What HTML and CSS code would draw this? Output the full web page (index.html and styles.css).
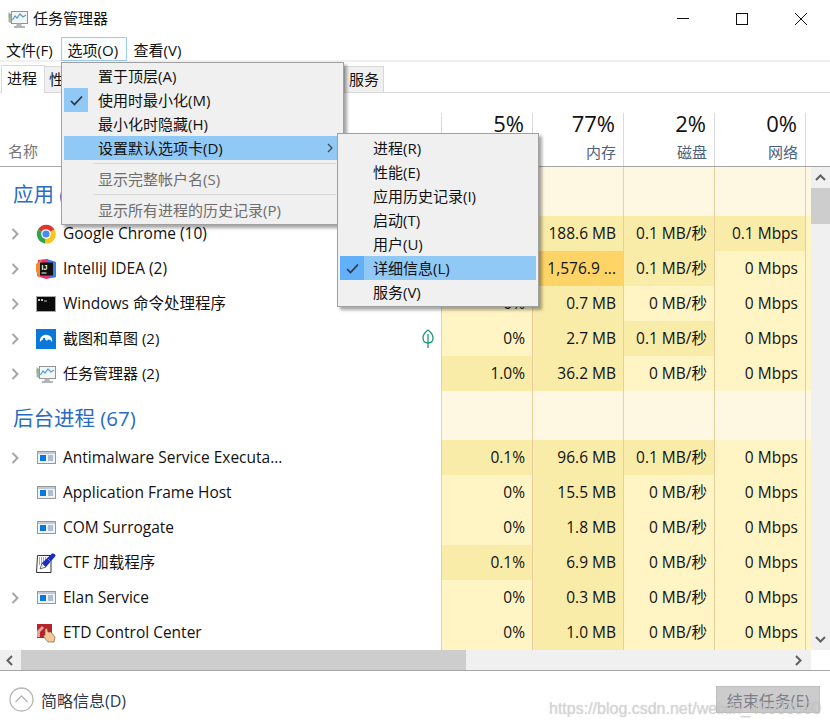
FILE: index.html
```html
<!DOCTYPE html>
<html lang="zh-CN">
<head>
  <meta charset="UTF-8">
  <title>任务管理器</title>
  <link rel="stylesheet" href="styles.css">
</head>
<body>
  <svg class="defs" width="0" height="0">
    <symbol id="chev" viewBox="0 0 8 12"><path d="M1.5 1 L6.5 6 L1.5 11" fill="none" stroke="#a6a6a6" stroke-width="2"/></symbol>
    <symbol id="taskmgr" viewBox="0 0 20 20">
      <path d="M0.500 3 L3 5 L3 14 L0.500 13 Z" fill="#a9b3a9"/>
      <rect x="3.500" y="2.500" width="16" height="12" fill="#f4f6f6" stroke="#8f9595"/>
      <path d="M4.500 11 L7 7 L9 9 L12 5 L15 8 L18 6" fill="none" stroke="#4f9fd6" stroke-width="1.200"/>
      <path d="M0.500 6 h2 M0.500 8 h2" stroke="#63bb63"/>
      <path d="M9 14.500 h4 l1 2.500 h3 v2 H6 v-2 h2 Z" fill="#b0b6b6"/>
    </symbol>
    <symbol id="win" viewBox="0 0 19 13">
      <rect x="0.500" y="0.500" width="18" height="12" fill="#eef3f8" stroke="#989898"/>
      <rect x="1" y="1" width="17" height="2" fill="#c2ccd8"/>
      <rect x="3" y="4" width="6" height="6" fill="#0a78d8"/>
      <path d="M11 5 h5 M11 7 h5 M11 9 h5" stroke="#6f8aa8"/>
    </symbol>
  </svg>

  <div class="window">
    <header class="titlebar">
      <svg class="title-icon"><use href="#taskmgr"/></svg>
      <span class="title-text">任务管理器</span>
      <div class="controls">
        <svg width="12" height="12" viewBox="0 0 12 12"><path d="M0 5.500 H12" stroke="#111"/></svg>
        <svg width="12" height="12" viewBox="0 0 12 12"><rect x="0.500" y="0.500" width="11" height="11" fill="none" stroke="#111"/></svg>
        <svg width="12" height="12" viewBox="0 0 12 12"><path d="M0 0 L12 12 M12 0 L0 12" stroke="#111"/></svg>
      </div>
    </header>

    <nav class="menubar">
      <span class="menu-item">文件(F)</span>
      <span class="menu-item menu-open">选项(O)</span>
      <span class="menu-item">查看(V)</span>
    </nav>

    <div class="tabs">
      <span class="tab tab-active">进程</span>
      <span class="tab">性能</span>
      <span class="tab">应用历史记录</span>
      <span class="tab">启动</span>
      <span class="tab">用户</span>
      <span class="tab">详细信息</span>
      <span class="tab">服务</span>
    </div>

    <div class="head">
      <div class="head-name">名称</div>
      <div class="head-col head-first"><b>5%</b><span>CPU</span></div>
      <div class="head-col"><b>77%</b><span>内存</span></div>
      <div class="head-col"><b>2%</b><span>磁盘</span></div>
      <div class="head-col"><b>0%</b><span>网络</span></div>
    </div>

    <div class="body">
      <div class="list">
        <div class="row section">
          <div class="name section-name">应用 (5)</div>
          <div class="cell first"></div><div class="cell"></div><div class="cell"></div><div class="cell"></div><div class="tail"></div>
        </div>

        <div class="row">
          <div class="name">
            <svg class="chev"><use href="#chev"/></svg>
            <svg class="icon" viewBox="0 0 20 20">
              <path d="M10 10 L2 5.500 A9.500 9.500 0 0 1 18.500 5.500 Z" fill="#e0372c"/>
              <path d="M10 10 L18.500 5.500 A9.500 9.500 0 0 1 9 19.500 Z" fill="#f8c51c"/>
              <path d="M10 10 L9 19.500 A9.500 9.500 0 0 1 2 5.500 Z" fill="#2fa44f"/>
              <circle cx="10" cy="10" r="4.800" fill="#fff"/>
              <circle cx="10" cy="10" r="3.600" fill="#4a8af0"/>
            </svg>
            <span>Google Chrome (10)</span>
          </div>
          <div class="cell first mid">0%</div><div class="cell mid">188.6 MB</div><div class="cell mid">0.1 MB/秒</div><div class="cell mid">0.1 Mbps</div><div class="tail"></div>
        </div>

        <div class="row">
          <div class="name">
            <svg class="chev"><use href="#chev"/></svg>
            <svg class="icon" viewBox="0 0 20 20">
              <path d="M2 1 L11 0 L19 8 L20 18 L10 20 L1 17 Z" fill="#e8316f"/>
              <path d="M11 0 L20 3 L20 18 L14 19 Z" fill="#3d7ee8"/>
              <path d="M0 5 L5 1 L8 10 L3 19 L0 12 Z" fill="#f28a2e"/>
              <rect x="4" y="3.500" width="13" height="13" fill="#111"/>
              <text x="5.500" y="10.500" class="ij">IJ</text>
              <path d="M5.500 14 h5" stroke="#fff"/>
            </svg>
            <span>IntelliJ IDEA (2)</span>
          </div>
          <div class="cell first mid">0%</div><div class="cell high">1,576.9 ...</div><div class="cell mid">0.1 MB/秒</div><div class="cell">0 Mbps</div><div class="tail"></div>
        </div>

        <div class="row">
          <div class="name">
            <svg class="chev"><use href="#chev"/></svg>
            <svg class="icon" viewBox="0 0 20 20">
              <rect x="0.500" y="2.500" width="19" height="15" fill="#0a0a0a" stroke="#a8a8a8"/>
              <path d="M2 5 h2 v2 H2 Z M5 5 h2 v2 H5 Z" fill="#c8c8c8"/>
              <path d="M8 7 h3" stroke="#c8c8c8"/>
            </svg>
            <span class="mixed">Windows 命令处理程序</span>
          </div>
          <div class="cell first">0%</div><div class="cell mid">0.7 MB</div><div class="cell">0 MB/秒</div><div class="cell">0 Mbps</div><div class="tail"></div>
        </div>

        <div class="row">
          <div class="name">
            <svg class="chev"><use href="#chev"/></svg>
            <svg class="icon" viewBox="0 0 20 20">
              <rect width="20" height="20" fill="#0a78d8"/>
              <path d="M4 13 C3 8 8 5 11 6 C15 6 17 10 16 13 C14 10 12 10 11 12 C9 9 6 10 4 13 Z" fill="#fff"/>
              <circle cx="8" cy="10" r="1.200" fill="#0a78d8"/>
            </svg>
            <span class="mixed cjk">截图和草图 (2)</span>
            <svg class="leaf" width="12" height="19" viewBox="0 0 12 19">
              <path d="M6 1 C2 4 1 7 1 9 C1 12 3 14 6 14 C9 14 11 12 11 9 C11 7 10 4 6 1 Z" fill="none" stroke="#1a9a7a" stroke-width="1.300"/>
              <path d="M6 5 V19" stroke="#1a9a7a" stroke-width="1.300"/>
            </svg>
          </div>
          <div class="cell first">0%</div><div class="cell mid">2.7 MB</div><div class="cell mid">0.1 MB/秒</div><div class="cell">0 Mbps</div><div class="tail"></div>
        </div>

        <div class="row">
          <div class="name">
            <svg class="chev"><use href="#chev"/></svg>
            <svg class="icon"><use href="#taskmgr"/></svg>
            <span class="mixed cjk">任务管理器 (2)</span>
          </div>
          <div class="cell first mid">1.0%</div><div class="cell mid">36.2 MB</div><div class="cell">0 MB/秒</div><div class="cell">0 Mbps</div><div class="tail"></div>
        </div>

        <div class="row section">
          <div class="name section-name">后台进程 (67)</div>
          <div class="cell first"></div><div class="cell"></div><div class="cell"></div><div class="cell"></div><div class="tail"></div>
        </div>

        <div class="row">
          <div class="name">
            <svg class="chev"><use href="#chev"/></svg>
            <svg class="icon win"><use href="#win"/></svg>
            <span>Antimalware Service Executa...</span>
          </div>
          <div class="cell first mid">0.1%</div><div class="cell mid">96.6 MB</div><div class="cell mid">0.1 MB/秒</div><div class="cell">0 Mbps</div><div class="tail"></div>
        </div>

        <div class="row">
          <div class="name">
            <span class="chev"></span>
            <svg class="icon win"><use href="#win"/></svg>
            <span>Application Frame Host</span>
          </div>
          <div class="cell first">0%</div><div class="cell mid">15.5 MB</div><div class="cell">0 MB/秒</div><div class="cell">0 Mbps</div><div class="tail"></div>
        </div>

        <div class="row">
          <div class="name">
            <span class="chev"></span>
            <svg class="icon win"><use href="#win"/></svg>
            <span>COM Surrogate</span>
          </div>
          <div class="cell first">0%</div><div class="cell mid">1.8 MB</div><div class="cell">0 MB/秒</div><div class="cell">0 Mbps</div><div class="tail"></div>
        </div>

        <div class="row">
          <div class="name">
            <span class="chev"></span>
            <svg class="icon" viewBox="0 0 20 20">
              <path d="M1.500 2.500 H15 V19.500 H0.500 Z" fill="#fff" stroke="#333"/>
              <path d="M3 5 h8 M3 7 h7 M3 9 h5 M3 11 h4" stroke="#555" stroke-dasharray="1 1"/>
              <path d="M4 16 L6 10 L16 0.500 Q19.500 0 19.500 3 L10 14 Z" fill="#1a2fc0"/>
              <path d="M4 16 L6 10 L10 14 Z" fill="#e8e8e8" stroke="#222" stroke-width="0.500"/>
              <path d="M12 6 L15 9" stroke="#6f86f0"/>
            </svg>
            <span class="mixed">CTF 加载程序</span>
          </div>
          <div class="cell first mid">0.1%</div><div class="cell mid">6.9 MB</div><div class="cell">0 MB/秒</div><div class="cell">0 Mbps</div><div class="tail"></div>
        </div>

        <div class="row">
          <div class="name">
            <svg class="chev"><use href="#chev"/></svg>
            <svg class="icon win"><use href="#win"/></svg>
            <span>Elan Service</span>
          </div>
          <div class="cell first">0%</div><div class="cell mid">0.3 MB</div><div class="cell">0 MB/秒</div><div class="cell">0 Mbps</div><div class="tail"></div>
        </div>

        <div class="row">
          <div class="name">
            <span class="chev"></span>
            <svg class="icon" viewBox="0 0 20 20">
              <rect x="1" y="1" width="15" height="14" fill="#b5232b"/>
              <path d="M1 8 L6 3 L8 5 L4 9 V14 H1 Z" fill="#e8a0a0"/>
              <path d="M9 6 L11 5 L12 9 L15 9 L19 14 L18 19 L12 19 L7 13 L9 12 Z" fill="#f3c79a" stroke="#7a4a28" stroke-width="0.600"/>
            </svg>
            <span>ETD Control Center</span>
          </div>
          <div class="cell first">0%</div><div class="cell mid">1.0 MB</div><div class="cell">0 MB/秒</div><div class="cell">0 Mbps</div><div class="tail"></div>
        </div>
      </div>

      <div class="vscroll">
        <svg class="vscroll-arrow" width="11" height="7" viewBox="0 0 11 7"><path d="M1 6 L5.500 1.500 L10 6" fill="none" stroke="#606060" stroke-width="2"/></svg>
        <div class="vscroll-thumb"></div>
        <svg class="vscroll-arrow vscroll-down" width="11" height="7" viewBox="0 0 11 7"><path d="M1 1 L5.500 5.500 L10 1" fill="none" stroke="#606060" stroke-width="2"/></svg>
      </div>
    </div>

    <div class="hscroll">
      <svg class="hscroll-arrow" width="7" height="11" viewBox="0 0 7 11"><path d="M6 1 L1.500 5.500 L6 10" fill="none" stroke="#606060" stroke-width="2"/></svg>
      <div class="hscroll-thumb"></div>
      <svg class="hscroll-arrow hscroll-right" width="7" height="11" viewBox="0 0 7 11"><path d="M1 1 L5.500 5.500 L1 10" fill="none" stroke="#606060" stroke-width="2"/></svg>
    </div>

    <footer class="footer">
      <svg class="fewer" width="25" height="25" viewBox="0 0 25 25">
        <circle cx="12.500" cy="12.500" r="11.500" fill="none" stroke="#b5b5b5" stroke-width="1.300"/>
        <path d="M6.500 15 L12.500 9 L18.500 15" fill="none" stroke="#b5b5b5" stroke-width="1.300"/>
      </svg>
      <span class="fewer-text">简略信息(D)</span>
      <button class="end-task" disabled>结束任务(E)</button>
    </footer>

    <div class="popup popup-main">
      <div class="popup-row">置于顶层(A)</div>
      <div class="popup-row">
        <span class="check check-on"><svg width="13" height="11" viewBox="0 0 13 11"><path d="M1 6 L4.500 9.500 L12 1.500" fill="none" stroke="#333" stroke-width="1.700"/></svg></span>
        使用时最小化(M)
      </div>
      <div class="popup-row">最小化时隐藏(H)</div>
      <div class="popup-row popup-hover">
        设置默认选项卡(D)
        <svg class="popup-arrow" width="6" height="10" viewBox="0 0 6 10"><path d="M1 1 L5 5 L1 9" fill="none" stroke="#444" stroke-width="1.200"/></svg>
      </div>
      <div class="popup-sep"></div>
      <div class="popup-row popup-off">显示完整帐户名(S)</div>
      <div class="popup-sep"></div>
      <div class="popup-row popup-off">显示所有进程的历史记录(P)</div>
    </div>

    <div class="popup popup-sub">
      <div class="popup-row">进程(R)</div>
      <div class="popup-row">性能(E)</div>
      <div class="popup-row">应用历史记录(I)</div>
      <div class="popup-row">启动(T)</div>
      <div class="popup-row">用户(U)</div>
      <div class="popup-row popup-hover">
        <span class="check check-hover"><svg width="13" height="11" viewBox="0 0 13 11"><path d="M1 6 L4.500 9.500 L12 1.500" fill="none" stroke="#333" stroke-width="1.700"/></svg></span>
        详细信息(L)
      </div>
      <div class="popup-row">服务(V)</div>
    </div>

    <div class="watermark">https://blog.csdn.net/weixin_45903580</div>
  </div>
</body>
</html>
```

FILE: styles.css
```css
* {
  box-sizing: border-box;
}
html, body {
  margin: 0;
  padding: 0;
  background: #fff;
}
body {
  font-family: "Open Sans", "Noto Sans CJK SC", sans-serif;
  font-size: 15px;
  color: #111;
}
.defs {
  position: absolute;
}
.window {
  position: relative;
  width: 830px;
  height: 728px;
  overflow: hidden;
  display: flex;
  flex-direction: column;
}

/* title bar */
.titlebar {
  height: 37px;
  flex: none;
  display: flex;
  align-items: center;
  padding-left: 8px;
}
.title-icon {
  width: 20px;
  height: 20px;
}
.title-text {
  margin-left: 5px;
  padding-bottom: 2px;
}
.controls {
  margin-left: auto;
  display: flex;
  gap: 47px;
  padding-right: 23px;
}

/* menu */
.menubar {
  height: 25px;
  flex: none;
  display: flex;
  gap: 1px;
  border-bottom: 2px solid #f0f0f0;
}
.menu-item {
  padding: 0 5px;
  line-height: 24px;
  height: 24px;
  border: 1px solid transparent;
}
.menu-open {
  border-color: #9ccaf0;
  background: #fafdff;
  width: 66px;
  margin-left: 1px;
  padding-left: 6px;
}

/* tabs */
.tabs {
  height: 31px;
  flex: none;
  display: flex;
  align-items: flex-end;
  padding-left: 1px;
  border-bottom: 1px solid #d9d9d9;
  gap: 2px;
}
.tab {
  height: 26px;
  padding: 0 4px;
  line-height: 25px;
  background: #f0f0f0;
  border: 1px solid #d9d9d9;
  border-bottom: 0;
}
.tab-active {
  height: 28px;
  width: 44px;
  padding-left: 5px;
  background: #fff;
  margin-right: -3px;
  margin-bottom: -1px;
}

/* table header */
.head {
  margin-top: 20px;
  height: 54px;
  flex: none;
  display: flex;
  border-bottom: 1px solid #a6a6a6;
  background: #fff;
}
.head-name {
  width: 441px;
  padding: 27px 0 0 8px;
  color: #757575;
}
.head-col {
  width: 91px;
  border-right: 1px solid #d9d9d9;
  display: flex;
  flex-direction: column;
  align-items: flex-end;
  padding-right: 7px;
}
.head-first {
  width: 92px;
  border-left: 1px solid #d9d9d9;
}
.head-col b {
  font-weight: 400;
  font-size: 22px;
  line-height: 22px;
  margin: -1px 1px 0 0;
}
.head-col span {
  margin-top: 8px;
  color: #4c607a;
  line-height: 20px;
}

/* table body */
.body {
  height: 483px;
  flex: none;
  display: flex;
}
.list {
  width: 811px;
  height: 483px;
  overflow: hidden;
}
.row {
  height: 35px;
  display: flex;
  font-size: 15.500px;
}
.section {
  height: 49px;
}
.name {
  width: 441px;
  display: flex;
  align-items: center;
  padding-left: 11px;
  white-space: nowrap;
}
.name span {
  padding-bottom: 1px;
}
.name .mixed {
  padding-bottom: 3px;
}
.name .cjk {
  font-size: 15px;
}
.section-name {
  padding: 3px 0 0 13px;
  font-size: 20.500px;
  color: #2a6cc4;
}
.chev {
  width: 8px;
  height: 12px;
  flex: none;
}
.icon {
  width: 20px;
  height: 20px;
  margin: 0 7px 0 17px;
  flex: none;
}
.win {
  width: 19px;
  height: 13px;
  margin: 0 7px 0 18px;
}
.ij {
  font-family: "Liberation Sans", sans-serif;
  font-size: 7px;
  font-weight: 700;
  fill: #fff;
}
.leaf {
  margin-left: auto;
  margin-right: 7px;
}
.cell {
  width: 91px;
  padding-right: 7px;
  text-align: right;
  line-height: 35px;
  background: #fff4c4;
  border-right: 1px solid #e9cf9b;
  white-space: nowrap;
}
.first {
  width: 92px;
  border-left: 1px solid #e9cf9b;
}
.mid {
  background: #f9eca8;
}
.high {
  background: #ffd466;
}
.tail {
  flex: 1;
  background: #fff4c4;
}
.section .cell,
.section .tail {
  background: #fef7e2;
}

/* scrollbars */
.vscroll {
  width: 19px;
  background: #f0f0f0;
  display: flex;
  flex-direction: column;
  align-items: center;
}
.vscroll-arrow {
  margin-top: 7px;
  flex: none;
}
.vscroll-thumb {
  width: 100%;
  height: 36px;
  margin-top: 7px;
  background: #cdcdcd;
}
.vscroll-down {
  margin-top: auto;
  margin-bottom: 7px;
}
.hscroll {
  width: 811px;
  height: 20px;
  flex: none;
  background: #f0f0f0;
  display: flex;
  align-items: center;
}
.hscroll-arrow {
  margin-left: 6px;
  flex: none;
}
.hscroll-thumb {
  width: 445px;
  height: 100%;
  margin-left: 8px;
  background: #cdcdcd;
}
.hscroll-right {
  margin-left: auto;
  margin-right: 9px;
}

/* footer */
.footer {
  flex: 1;
  border-top: 1px solid #a6a6a6;
  display: flex;
  align-items: center;
  padding: 0 10px 0 9px;
  font-size: 16px;
}
.fewer-text {
  margin-left: 7px;
  color: #2b3a4e;
}
.end-task {
  margin-left: auto;
  width: 104px;
  height: 27px;
  padding: 0;
  font-family: inherit;
  font-size: 16px;
  color: #7f7f8a;
  background: #cccccc;
  border: 1px solid #bfbfbf;
}

/* dropdown menus */
.popup {
  position: absolute;
  background: #f0f0f0;
  border: 1px solid #a0a0a0;
  box-shadow: 3px 3px 3px rgba(0, 0, 0, 0.35);
  padding: 2px;
}
.popup-main {
  left: 61px;
  top: 62px;
  width: 283px;
  height: 163px;
  padding-top: 1px;
}
.popup-sub {
  left: 337px;
  top: 133px;
  width: 202px;
  height: 174px;
}
.popup-row {
  position: relative;
  height: 24px;
  line-height: 24px;
  padding-left: 34px;
  white-space: nowrap;
}
.popup-sub .popup-row {
  padding-left: 33px;
}
.popup-hover {
  background: #90c8f6;
}
.popup-off {
  color: #6d6d6d;
}
.popup-sep {
  height: 1px;
  margin: 3px 5px 3px 30px;
  background: #d7d7d7;
}
.check {
  position: absolute;
  left: 0;
  top: 0;
  width: 24px;
  height: 24px;
  display: flex;
  align-items: center;
  justify-content: center;
}
.check-on {
  background: #90c8f6;
}
.check-hover {
  background: #62b0fa;
}
.popup-arrow {
  position: absolute;
  right: 8px;
  top: 7px;
}
.watermark {
  position: absolute;
  left: 549px;
  top: 700px;
  font-family: "Liberation Sans", sans-serif;
  font-size: 16px;
  color: rgba(215, 215, 215, 0.65);
  text-shadow: 0 0 1px rgba(130, 130, 130, 0.45);
  white-space: nowrap;
}
```
